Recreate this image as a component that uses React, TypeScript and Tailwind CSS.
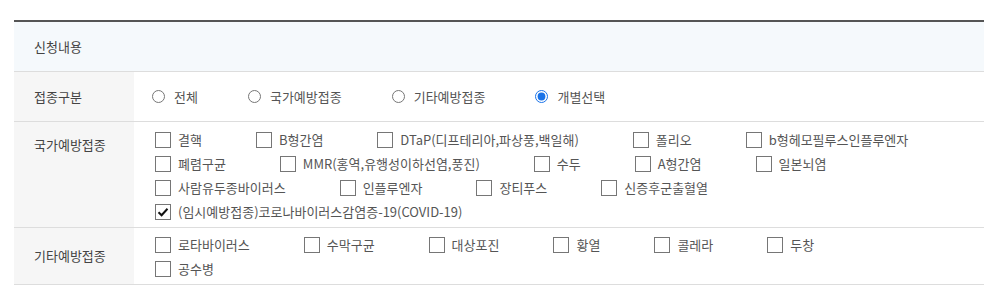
const national = [
  "결핵",
  "B형간염",
  "DTaP(디프테리아,파상풍,백일해)",
  "폴리오",
  "b형헤모필루스인플루엔자",
  "폐렴구균",
  "MMR(홍역,유행성이하선염,풍진)",
  "수두",
  "A형간염",
  "일본뇌염",
  "사람유두종바이러스",
  "인플루엔자",
  "장티푸스",
  "신증후군출혈열",
  "(임시예방접종)코로나바이러스감염증-19(COVID-19)",
];

const others = ["로타바이러스", "수막구균", "대상포진", "황열", "콜레라", "두창", "공수병"];

function Check({ label, checked }: { label: string; checked?: boolean }) {
  return (
    <label className="flex items-center h-6 mr-[54px] cursor-pointer">
      <span className="w-4 h-4 border border-[#767676] bg-white flex items-center justify-center shrink-0">
        {checked && (
          <svg width="12" height="10" viewBox="0 0 12 10">
            <path d="M1.5 5.2 L4.6 8.2 L10.5 1.8" fill="none" stroke="#111" strokeWidth="2" />
          </svg>
        )}
      </span>
      <span className="ml-[7px] whitespace-nowrap">{label}</span>
    </label>
  );
}

function Radio({ label, checked }: { label: string; checked?: boolean }) {
  return (
    <label className="flex items-center mr-[50px] cursor-pointer">
      <input type="radio" name="kind" defaultChecked={checked} className="m-0 w-[13px] h-[13px] accent-[#1a73e8]" />
      <span className="ml-[9px] whitespace-nowrap">{label}</span>
    </label>
  );
}

export default function App() {
  return (
    <div
      className="w-[997px] h-[301px] bg-white pt-5 px-[14px] text-[13px] text-[#555]"
      style={{ fontFamily: '"Noto Sans CJK KR", "Noto Sans", sans-serif' }}
    >
      <div className="w-[970px] border-t-2 border-[#555]">
        {/* header */}
        <div className="h-[50px] bg-[#f5f9fc] border-b border-[#ddd] flex items-center pl-5 text-[#444]">
          신청내용
        </div>

        {/* 접종구분 */}
        <div className="flex border-b border-[#ddd]">
          <div className="w-[120px] shrink-0 bg-[#f6f6f6] h-[49px] flex items-center pl-5 text-[#444]">접종구분</div>
          <div className="flex items-center pl-[18px]">
            <Radio label="전체" />
            <Radio label="국가예방접종" />
            <Radio label="기타예방접종" />
            <Radio label="개별선택" checked />
          </div>
        </div>

        {/* 국가예방접종 */}
        <div className="flex border-b border-[#ddd]">
          <div className="w-[120px] shrink-0 bg-[#f6f6f6] pl-5 pt-[13px] text-[#444]">국가예방접종</div>
          <div className="flex-1 flex flex-wrap pl-[21px] pr-5 pt-[6px] pb-[3px]">
            {national.map((n) => (
              <Check key={n} label={n} checked={n.startsWith("(임시")} />
            ))}
          </div>
        </div>

        {/* 기타예방접종 */}
        <div className="flex border-b border-[#ddd]">
          <div className="w-[120px] shrink-0 bg-[#f6f6f6] pl-5 flex items-center text-[#444]">기타예방접종</div>
          <div className="flex-1 flex flex-wrap pl-[21px] pr-5 pt-[5px] pb-[3px]">
            {others.map((n) => (
              <Check key={n} label={n} />
            ))}
          </div>
        </div>
      </div>
    </div>
  );
}
